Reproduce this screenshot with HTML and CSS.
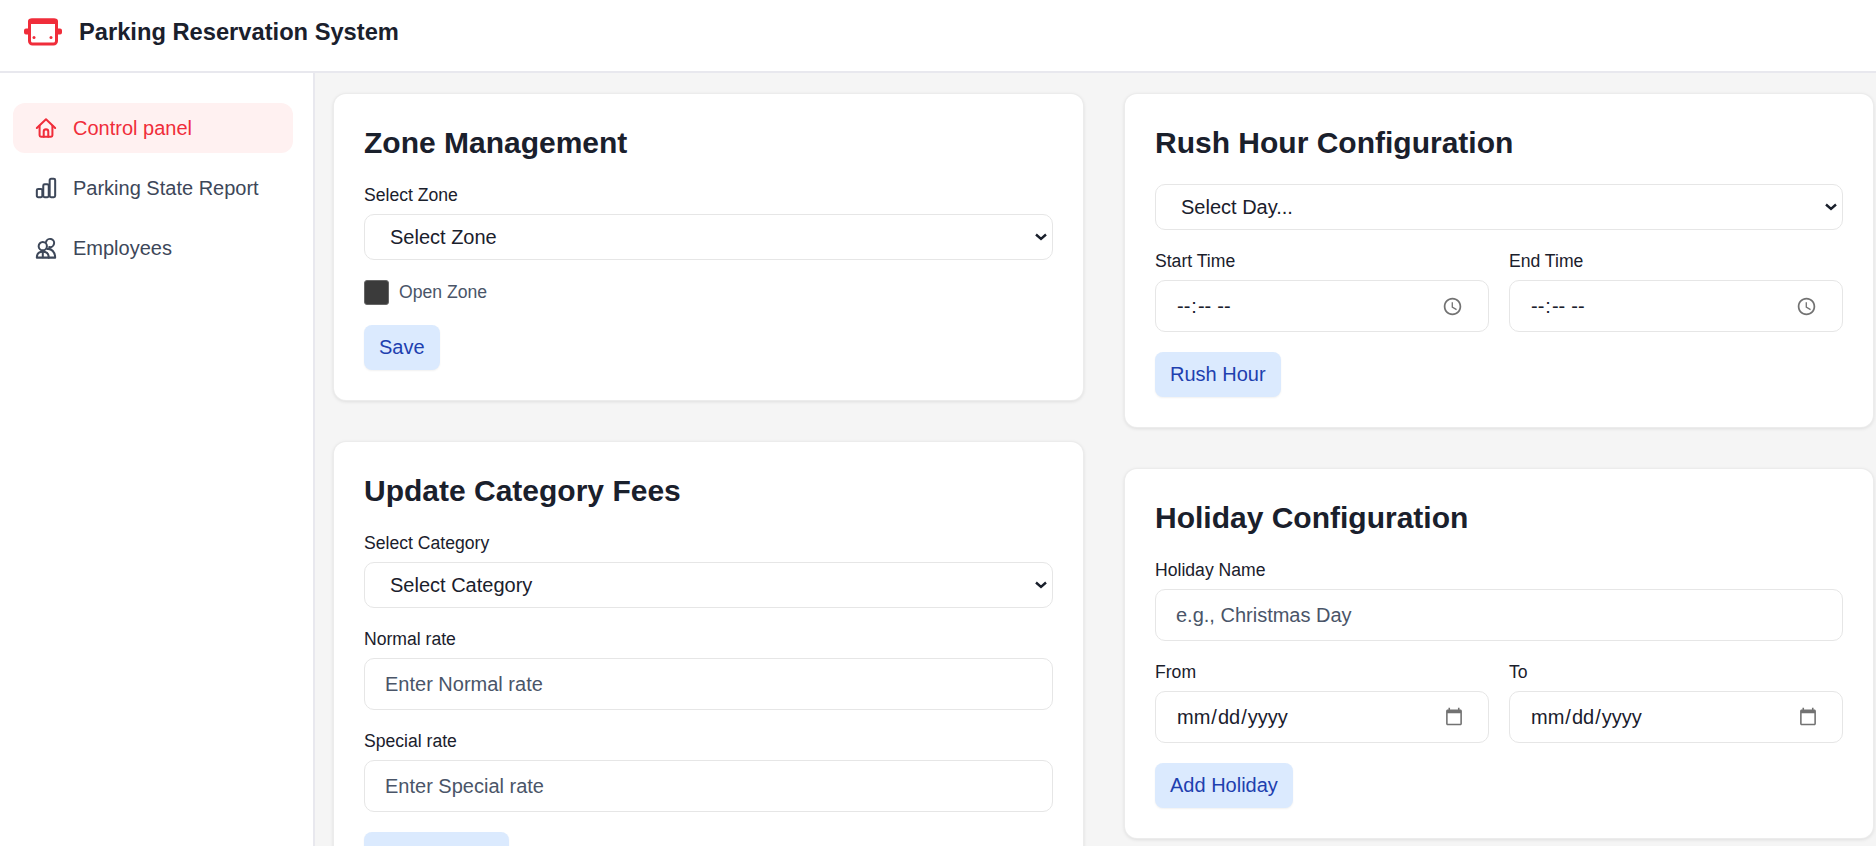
FILE: index.html
```html
<!DOCTYPE html>
<html lang="en">
<head>
  <meta charset="UTF-8" />
  <title>Parking Reservation System</title>
  <link rel="stylesheet" href="styles.css">
</head>
<body>

<header class="topbar">
  <svg class="logo" viewBox="0 0 40 30" fill="none">
    <path d="M5 10.500H3a2 2 0 0 0-2 2v2a2 2 0 0 0 2 2h2zM35 10.500h2a2 2 0 0 1 2 2v2a2 2 0 0 1-2 2h-2z" fill="#f02d3a"/>
    <rect x="6.500" y="2" width="27" height="24" rx="3" stroke="#f02d3a" stroke-width="3"/>
    <path d="M5 3.500a3 3 0 0 1 3-3h24a3 3 0 0 1 3 3V6H5z" fill="#f02d3a"/>
    <circle cx="11" cy="19.500" r="1.500" fill="#f02d3a"/>
    <circle cx="28" cy="19.500" r="1.500" fill="#f02d3a"/>
  </svg>
  <h1>Parking Reservation System</h1>
</header>

<div class="layout">
  <nav class="sidebar">
    <a class="nav-item active" href="#">
      <svg class="nav-icon" viewBox="0 0 24 24" fill="none" stroke="currentColor" stroke-width="2.200" stroke-linecap="round" stroke-linejoin="round">
        <path d="M2 12 12 2.500 22 12"/>
        <path d="M5 9.500V20a1.500 1.500 0 0 0 1.500 1.500h11A1.500 1.500 0 0 0 19 20V9.500"/>
        <path d="M9.500 21.500V16a2.500 2.500 0 0 1 5 0v5.500"/>
      </svg>
      Control panel
    </a>
    <a class="nav-item" href="#">
      <svg class="nav-icon" viewBox="0 0 24 24" fill="none" stroke="currentColor" stroke-width="2.200" stroke-linejoin="round">
        <rect x="2" y="13" width="6" height="9" rx="1.500"/>
        <rect x="9" y="8" width="6" height="14" rx="1.500"/>
        <rect x="16" y="2" width="6" height="20" rx="1.500"/>
      </svg>
      Parking State Report
    </a>
    <a class="nav-item" href="#">
      <svg class="nav-icon" viewBox="0 0 24 24" fill="none" stroke="currentColor" stroke-width="2.200" stroke-linecap="round" stroke-linejoin="round">
        <circle cx="8.500" cy="10" r="4.500"/>
        <path d="M12 5.500a4.500 4.500 0 1 1 3.500 5.500"/>
        <path d="M2 22.500c0-4 2.500-6.500 6.500-6.500s6.500 2.500 6.500 6.500z"/>
        <path d="M13.500 13c4.500-.5 8.500 3.500 8.500 9.500h-7"/>
        <path d="M8.500 17v5"/>
      </svg>
      Employees
    </a>
  </nav>

  <main class="content">
    <div class="column">
      <section class="card">
        <h2>Zone Management</h2>
        <label class="field-label">Select Zone</label>
        <select class="select"><option>Select Zone</option></select>
        <label class="check-row">
          <input type="checkbox" class="check">
          Open Zone
        </label>
        <button class="btn">Save</button>
      </section>

      <section class="card">
        <h2>Update Category Fees</h2>
        <label class="field-label">Select Category</label>
        <select class="select select-spaced"><option>Select Category</option></select>
        <label class="field-label">Normal rate</label>
        <input class="input input-spaced" type="text" placeholder="Enter Normal rate">
        <label class="field-label">Special rate</label>
        <input class="input input-last" type="text" placeholder="Enter Special rate">
        <button class="btn">Update rates</button>
      </section>
    </div>

    <div class="column">
      <section class="card">
        <h2 class="title-tight">Rush Hour Configuration</h2>
        <select class="select select-spaced"><option>Select Day...</option></select>
        <div class="two-col">
          <div>
            <label class="field-label">Start Time</label>
            <input class="input" type="time">
          </div>
          <div>
            <label class="field-label">End Time</label>
            <input class="input" type="time">
          </div>
        </div>
        <button class="btn">Rush Hour</button>
      </section>

      <section class="card">
        <h2>Holiday Configuration</h2>
        <label class="field-label">Holiday Name</label>
        <input class="input input-spaced" type="text" placeholder="e.g., Christmas Day">
        <div class="two-col">
          <div>
            <label class="field-label">From</label>
            <input class="input" type="date">
          </div>
          <div>
            <label class="field-label">To</label>
            <input class="input" type="date">
          </div>
        </div>
        <button class="btn">Add Holiday</button>
      </section>
    </div>
  </main>
</div>

</body>
</html>
```

FILE: styles.css
```css
* { box-sizing: border-box; }
html, body { height: 100%; }
body { margin: 0; height: 846px; overflow: hidden; font-family: "Liberation Sans", Arial, sans-serif; background: #f5f5f5; color: #1a202c; }

.topbar { display: flex; align-items: center; height: 73px; padding: 0 0 6px 23px; background: #fff; border-bottom: 2px solid #e8e8ee; }
.logo { width: 40px; height: 30px; margin-right: 16px; }
.topbar h1 { margin: 0; font-size: 23.700px; font-weight: 700; color: #1a202c; }

.layout { display: flex; height: 773px; }
.sidebar { flex: 0 0 315px; padding: 30px 20px 0 13px; background: #fff; border-right: 2px solid #e8e8ee; }
.nav-item { display: flex; align-items: center; height: 50px; margin-bottom: 10px; padding-left: 22px; border-radius: 12px; font-size: 20px; color: #3d4759; text-decoration: none; }
.nav-item.active { background: #fff1f1; color: #f02d3a; }
.nav-icon { width: 22px; height: 22px; margin-right: 16px; }

.content { flex: 1; display: grid; grid-template-columns: 749px 748px; column-gap: 42px; padding: 21px 0 0 19px; overflow: hidden; }
.column { display: flex; flex-direction: column; gap: 42px; }

.card { padding: 31px 30px 30px; background: #fff; border-radius: 12px; box-shadow: 0 0 0 1px #ececec, 0 1px 4px rgba(0, 0, 0, .14); }
.card h2 { margin: 0 0 24px; font-size: 30px; line-height: 36px; font-weight: 700; color: #1a202c; }
.card h2.title-tight { margin-bottom: 23px; }

.field-label { display: block; margin-bottom: 8px; font-size: 17.600px; line-height: 21px; color: #1a202c; }

.select { display: block; width: 100%; height: 46px; padding: 0 30px 0 25px; appearance: none; font-family: inherit; font-size: 20px; color: #1a202c; background: #fff url("data:image/svg+xml,%3Csvg xmlns='http://www.w3.org/2000/svg' width='12' height='8' fill='none' stroke='%231a202c' stroke-width='2.400'%3E%3Cpath d='M1 1.500l5 4.500 5-4.500'/%3E%3C/svg%3E") no-repeat right 5px center; border: 1px solid #e6e6e6; border-radius: 10px; }
.select-spaced { margin-bottom: 21px; }

.input { display: block; width: 100%; height: 52px; padding: 0 22px 0 20px; font-family: inherit; font-size: 20px; color: #1a202c; background: #fff; border: 1px solid #e6e6e6; border-radius: 10px; }
.input::placeholder { color: #4a5568; opacity: 1; }
.input::-webkit-calendar-picker-indicator { opacity: .55; }
.input-spaced { margin-bottom: 21px; }
.input-last { margin-bottom: 20px; }

.two-col { display: grid; grid-template-columns: 1fr 1fr; column-gap: 20px; margin-bottom: 20px; }

.check-row { display: flex; align-items: center; margin: 20px 0; font-size: 17.600px; color: #4a5568; }
.check { appearance: none; width: 25px; height: 25px; margin: 0 10px 0 0; background: #3b3b3b; border: 1px solid #666; border-radius: 3px; }

.btn { display: block; height: 45px; padding: 0 15px; font-family: inherit; font-size: 20px; color: #1e40af; background: #dbeafe; border: none; border-radius: 8px; box-shadow: 0 1px 2px rgba(0, 0, 0, .06); }
```
